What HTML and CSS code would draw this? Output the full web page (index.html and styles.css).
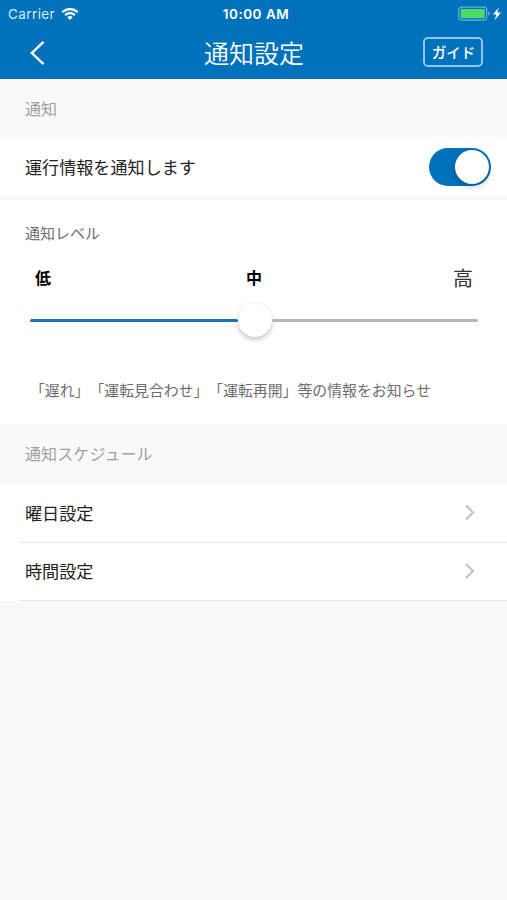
FILE: index.html
```html
<!DOCTYPE html>
<html lang="ja">
<head>
<meta charset="utf-8">
<title>通知設定</title>
<link rel="stylesheet" href="styles.css">
</head>
<body>
<header class="header">
  <div class="status">
    <div class="carrier"><span>Carrier</span>
      <svg width="18" height="14" viewBox="0 0 18 14" fill="none" stroke="#fff" stroke-width="2.2"><path d="M1.3 5.2a11 11 0 0 1 15.4 0M4.1 8.1a7 7 0 0 1 9.8 0"/><path d="M6.3 10.2a4 4 0 0 1 5.4 0L9 13z" fill="#fff" stroke="none"/></svg>
    </div>
    <div class="clock">10:00 AM</div>
    <div class="power">
      <svg width="44" height="16" viewBox="0 0 44 16"><rect x=".7" y="1.1" width="28" height="13" rx="3" fill="none" stroke="#69addd" stroke-width="1.2"/><rect x="2.6" y="3" width="24.2" height="9.2" rx="1" fill="#4cd964"/><path d="M30.2 5.4q1.8.6 1.8 2.2t-1.8 2.2z" fill="#69addd"/><path d="M40.8 1.6 35 8.5h3.2l-1.4 5.7 6.2-7.6h-3.6z" fill="#fff"/></svg>
    </div>
  </div>
  <div class="nav">
    <svg class="back" width="16" height="26" viewBox="0 0 16 26" fill="none" stroke="#fff" stroke-width="2.4"><path d="M14.5 1.8 2.9 13l11.6 11.2"/></svg>
    <h1 class="title">通知設定</h1>
    <button class="guide">ガイド</button>
  </div>
</header>
<main>
  <h2 class="section first">通知</h2>
  <div class="toggle-row"><span>運行情報を通知します</span><span class="switch"><span class="knob"></span></span></div>
  <section class="level">
    <h3 class="level-title">通知レベル</h3>
    <div class="labels"><b>低</b><b class="mid">中</b><span class="high">高</span></div>
    <div class="slider"><span class="filled"></span><span class="thumb"></span><span class="rest"></span></div>
    <p class="note">「遅れ」「運転見合わせ」「運転再開」等の情報をお知らせ</p>
  </section>
  <h2 class="section second">通知スケジュール</h2>
  <div class="list">
    <div class="item"><span>曜日設定</span><svg width="12" height="18" viewBox="0 0 12 18" fill="none" stroke="#c4c4c6" stroke-width="2.2"><path d="m2 1.5 7 7-7 7"/></svg></div>
    <div class="item"><span>時間設定</span><svg width="12" height="18" viewBox="0 0 12 18" fill="none" stroke="#c4c4c6" stroke-width="2.2"><path d="m2 2 7 7-7 7"/></svg></div>
  </div>
</main>
</body>
</html>
```
FILE: styles.css
```css
* { box-sizing: border-box; }
body {
  margin: 0;
  min-height: 900px;
  background: #f9f9f9;
  color: #222;
  font-family: "Noto Sans CJK JP", sans-serif;
  text-spacing-trim: space-all;
}
h1, h2, h3, p { margin: 0; font-weight: 400; }
svg { display: block; }
.header { height: 79px; background: #0071bb; color: #fff; }
.status {
  display: grid;
  grid-template-columns: 1fr auto 1fr;
  align-items: center;
  height: 27px;
  padding: 0 5px 0 8px;
  font-family: Inter, sans-serif;
  font-size: 13.5px;
}
.carrier { display: flex; align-items: center; gap: 6px; color: #d9ecf9; }
.carrier span { letter-spacing: .4px; }
.clock { margin-left: 2px; font-weight: 600; font-size: 13.5px; letter-spacing: .5px; }
.power { justify-self: end; }
.nav {
  display: grid;
  grid-template-columns: 1fr auto 1fr;
  align-items: center;
  height: 52px;
  padding: 0 24px 0 29px;
}
.title { margin: -2px 4px 0 0; font-size: 25px; line-height: 52px; font-weight: 350; }
.guide {
  justify-self: end;
  width: 60px;
  height: 30px;
  margin: 0 0 2px;
  padding: 0 0 0 1px;
  border: 2px solid #8fc6ec;
  border-radius: 5px;
  background: none;
  color: #fff;
  font: 500 14.5px/26px "Noto Sans CJK JP", sans-serif;
}
.section { padding-left: 25px; color: #a0a0a0; font-size: 16px; letter-spacing: .1px; }
.first { height: 58px; line-height: 58px; }
.second { height: 60px; line-height: 58px; }
.toggle-row {
  display: flex;
  align-items: center;
  justify-content: space-between;
  height: 59px;
  padding: 0 16px 0 25px;
  background: #fff;
  font-size: 17.1px;
}
.switch {
  display: flex;
  justify-content: flex-end;
  width: 62px;
  height: 38px;
  padding: 2px;
  border-radius: 19px;
  background: #0071bb;
}
.knob { width: 34px; height: 34px; border-radius: 50%; background: #fff; box-shadow: 0 3px 6px rgba(0,0,0,.2); }
.level { height: 224px; margin-top: 4px; padding: 22px 29px 0 25px; background: #fff; }
.level-title { height: 22px; color: #707070; font-size: 15px; line-height: 22px; }
.labels {
  display: grid;
  grid-template-columns: 1fr auto 1fr;
  height: 30px;
  margin: 19px 5px 0 10px;
  color: #000;
  font-size: 16px;
  line-height: 29px;
}
.high { justify-self: end; color: #333; font-size: 20px; line-height: 30px; }
.slider { display: flex; align-items: center; height: 34px; margin: 10px 0 0 5px; }
.filled { width: 208px; height: 3px; border-radius: 2px; background: #1675bb; }
.thumb { width: 34px; height: 34px; border-radius: 50%; background: #fff; box-shadow: 0 3px 5px rgba(0,0,0,.2), 0 0 7px rgba(0,0,0,.05); }
.rest { flex: 1; height: 3px; border-radius: 2px; background: #b5b5b5; }
.note { margin: 41px 0 0 5px; color: #6e6e6e; font-size: 14.87px; line-height: 24px; white-space: nowrap; }
.list { background: #fff; }
.item {
  display: flex;
  align-items: center;
  justify-content: space-between;
  height: 58.5px;
  margin-left: 20px;
  padding: 0 31px 0 5px;
  border-bottom: 1px solid #e6e6e6;
  font-size: 17.1px;
}
.item span { margin-top: -1px; }
```
